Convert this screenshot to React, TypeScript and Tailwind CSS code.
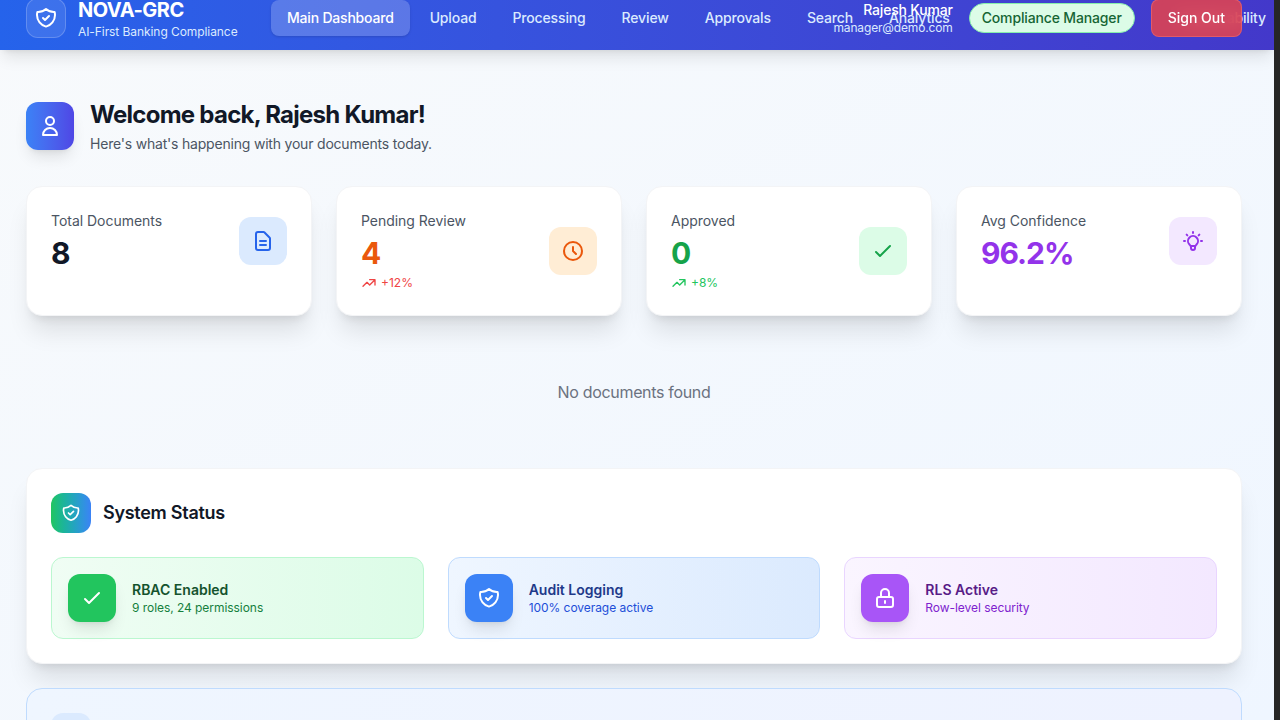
import React from 'react';
import {
  HiOutlineCheck,
  HiOutlineClock,
  HiOutlineDocumentText,
  HiOutlineLightBulb,
  HiOutlineLockClosed,
  HiOutlineShieldCheck,
  HiOutlineTrendingUp,
  HiOutlineUser,
} from 'react-icons/hi';

const navItems = ['Upload', 'Processing', 'Review', 'Approvals', 'Search', 'Analytics', 'Audit', 'Compliance'];

function StatCard({ label, value, valueClass, trend, trendClass, iconBg, icon }: {
  label: string;
  value: string;
  valueClass: string;
  trend?: string;
  trendClass?: string;
  iconBg: string;
  icon: React.ReactNode;
}) {
  return (
    <div className="rounded-2xl border border-[#f3f4f6] bg-white p-6 shadow-xl">
      <div className="flex items-center justify-between">
        <div>
          <p className="text-sm tracking-[-0.03px] text-[#4b5563]">{label}</p>
          <p className={`mt-1 text-3xl font-bold tracking-[-1px] ${valueClass}`}>{value}</p>
          {trend && (
            <div className={`mt-1 flex items-center gap-1 text-xs ${trendClass}`}>
              <HiOutlineTrendingUp className="h-4 w-4" />
              <span>{trend}</span>
            </div>
          )}
        </div>
        <div className={`flex h-12 w-12 items-center justify-center rounded-xl ${iconBg}`}>{icon}</div>
      </div>
    </div>
  );
}

function StatusTile({ title, sub, box, iconBg, titleClass, subClass, icon }: {
  title: string;
  sub: string;
  box: string;
  iconBg: string;
  titleClass: string;
  subClass: string;
  icon: React.ReactNode;
}) {
  return (
    <div className={`flex items-center gap-4 rounded-xl border bg-gradient-to-r p-4 ${box}`}>
      <div className={`flex h-12 w-12 items-center justify-center rounded-xl text-white shadow-lg ${iconBg}`}>{icon}</div>
      <div>
        <p className={`text-sm font-semibold ${titleClass}`}>{title}</p>
        <p className={`text-xs tracking-[-0.05px] ${subClass}`}>{sub}</p>
      </div>
    </div>
  );
}

export default function App() {
  return (
    <div className="flex h-screen overflow-hidden bg-[#262626] font-['Inter',sans-serif]">
      <div className="h-full w-[1274px] shrink-0 overflow-hidden bg-gradient-to-br from-[#f8fafc] to-[#eff6ff]">
        <header className="relative z-10 -mt-[14px] flex h-16 items-center bg-gradient-to-r from-[#2563eb] to-[#4338ca] pl-[26px] shadow-lg">
          <div className="flex w-[245px] shrink-0 items-center gap-3">
            <div className="flex h-10 w-10 items-center justify-center rounded-xl border border-white/20 bg-white/10">
              <HiOutlineShieldCheck className="h-6 w-6 text-white" />
            </div>
            <div>
              <p className="text-xl font-bold leading-7 tracking-[-0.5px] text-white">NOVA-GRC</p>
              <p className="text-xs tracking-[-0.07px] text-[#dbeafe]">AI-First Banking Compliance</p>
            </div>
          </div>
          <nav className="flex shrink-0 items-center gap-1 tracking-[-0.15px]">
            <span className="rounded-lg bg-white/20 px-4 py-2 text-sm font-medium tracking-[-0.2px] text-white shadow-sm">Main Dashboard</span>
            {navItems.map((item) => (
              <span key={item} className="px-4 py-2 text-sm font-medium text-[#dbeafe]">{item}</span>
            ))}
            <span className="py-2 pl-[25px] pr-4 text-sm font-medium text-[#dbeafe]">Explainability</span>
          </nav>
          <div className="absolute right-[32px] top-0 flex h-full items-center">
            <div className="text-right">
              <p className="text-sm font-medium leading-5 tracking-[-0.2px] text-white">Rajesh Kumar</p>
              <p className="text-xs leading-4 tracking-[-0.15px] text-[#dbeafe]">manager@demo.com</p>
            </div>
            <span className="ml-4 rounded-full border border-[#86efac] bg-[#dcfce7] px-3 py-1 text-sm font-medium tracking-[-0.15px] text-[#166534]">Compliance Manager</span>
            <span className="ml-4 rounded-lg border border-[#f87171]/50 bg-[#ef4444]/80 px-4 py-2 text-sm font-medium text-white backdrop-blur-sm">Sign Out</span>
          </div>
        </header>

        <main className="pl-[26px] pr-[32px] pt-[49px]">
          <div className="flex items-center gap-4">
            <div className="flex h-12 w-12 items-center justify-center rounded-xl bg-gradient-to-r from-[#3b82f6] to-[#4f46e5] shadow-lg">
              <HiOutlineUser className="h-6 w-6 text-white" />
            </div>
            <div>
              <h1 className="text-2xl font-bold tracking-[-0.74px] text-[#111827]">Welcome back, Rajesh Kumar!</h1>
              <p className="mt-1 text-sm leading-[18px] tracking-[-0.2px] text-[#4b5563]">Here's what's happening with your documents today.</p>
            </div>
          </div>

          <div className="mt-[33px] grid grid-cols-4 gap-6">
            <StatCard label="Total Documents" value="8" valueClass="text-[#111827]" iconBg="bg-[#dbeafe]" icon={<HiOutlineDocumentText className="h-6 w-6 text-[#2563eb]" />} />
            <StatCard label="Pending Review" value="4" valueClass="text-[#ea580c]" trend="+12%" trendClass="text-[#ef4444]" iconBg="bg-[#ffedd5]" icon={<HiOutlineClock className="h-6 w-6 text-[#ea580c]" />} />
            <StatCard label="Approved" value="0" valueClass="text-[#16a34a]" trend="+8%" trendClass="text-[#22c55e]" iconBg="bg-[#dcfce7]" icon={<HiOutlineCheck className="h-6 w-6 text-[#16a34a]" />} />
            <StatCard label="Avg Confidence" value="96.2%" valueClass="text-[#9333ea]" iconBg="bg-[#f3e8ff]" icon={<HiOutlineLightBulb className="h-6 w-6 text-[#9333ea]" />} />
          </div>

          <p className="mt-[64px] text-center text-base tracking-[-0.33px] text-[#6b7280]">No documents found</p>

          <section className="mt-[64px] rounded-2xl border border-[#f3f4f6] bg-white p-6 shadow-xl">
            <div className="flex items-center gap-3">
              <div className="flex h-10 w-10 items-center justify-center rounded-xl bg-gradient-to-r from-[#22c55e] to-[#3b82f6]">
                <HiOutlineShieldCheck className="h-5 w-5 text-white" />
              </div>
              <h2 className="text-lg font-semibold tracking-[-0.28px] text-[#111827]">System Status</h2>
            </div>
            <div className="mt-6 grid grid-cols-3 gap-6">
              <StatusTile title="RBAC Enabled" sub="9 roles, 24 permissions" box="border-[#bbf7d0] from-[#f0fdf4] to-[#dcfce7]" iconBg="bg-[#22c55e]" titleClass="text-[#14532d]" subClass="text-[#15803d]" icon={<HiOutlineCheck className="h-6 w-6" />} />
              <StatusTile title="Audit Logging" sub="100% coverage active" box="border-[#bfdbfe] from-[#eff6ff] to-[#dbeafe]" iconBg="bg-[#3b82f6]" titleClass="text-[#1e3a8a]" subClass="text-[#1d4ed8]" icon={<HiOutlineShieldCheck className="h-6 w-6" />} />
              <StatusTile title="RLS Active" sub="Row-level security" box="border-[#e9d5ff] from-[#faf5ff] to-[#f3e8ff]" iconBg="bg-[#a855f7]" titleClass="text-[#581c87]" subClass="text-[#7e22ce]" icon={<HiOutlineLockClosed className="h-6 w-6" />} />
            </div>
          </section>

          <section className="mt-6 rounded-2xl border border-[#bfdbfe] bg-gradient-to-r from-[#eff6ff] to-[#eef2ff] p-6">
            <div className="flex items-start gap-3">
              <div className="h-10 w-10 rounded-xl bg-[#dbeafe]" />
              <h2 className="mt-[2px] text-lg font-semibold text-[#1e3a8a]">Audit Trail</h2>
            </div>
          </section>
        </main>
      </div>
    </div>
  );
}
